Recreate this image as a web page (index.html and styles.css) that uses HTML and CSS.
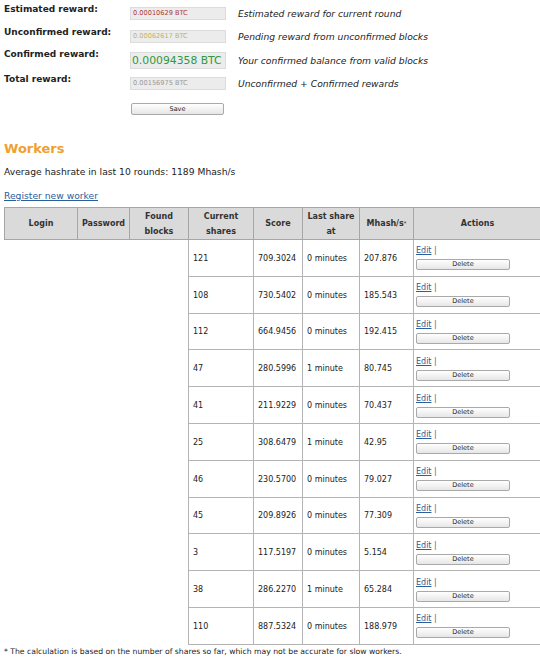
FILE: index.html
```html
<!DOCTYPE html>
<html>
<head>
<meta charset="utf-8">
<link rel="stylesheet" href="styles.css">
</head>
<body>
<div class="rewards">
  <div class="lbl">Estimated reward:</div>
  <div class="field est">0.00010629 BTC</div>
  <div class="desc">Estimated reward for current round</div>

  <div class="lbl">Unconfirmed reward:</div>
  <div class="field unc">0.00062617 BTC</div>
  <div class="desc">Pending reward from unconfirmed blocks</div>

  <div class="lbl">Confirmed reward:</div>
  <div class="field conf">0.00094358 BTC</div>
  <div class="desc">Your confirmed balance from valid blocks</div>

  <div class="lbl">Total reward:</div>
  <div class="field tot">0.00156975 BTC</div>
  <div class="desc">Unconfirmed + Confirmed rewards</div>
</div>
<button class="save">Save</button>

<h2 class="title">Workers</h2>
<p class="avg">Average hashrate in last 10 rounds: 1189 Mhash/s</p>
<a class="reg" href="#">Register new worker</a>

<table class="workers">
  <colgroup>
    <col class="c1"><col class="c2"><col class="c3"><col class="c4"><col class="c5"><col class="c6"><col class="c7"><col class="c8">
  </colgroup>
  <thead>
    <tr>
      <th>Login</th><th>Password</th><th>Found<br>blocks</th><th>Current<br>shares</th><th>Score</th><th>Last share<br>at</th><th>Mhash/s<span class="ast">*</span></th><th>Actions</th>
    </tr>
  </thead>
  <tbody>
    <tr><td class="e"></td><td class="e"></td><td class="e"></td><td>121</td><td>709.3024</td><td>0 minutes</td><td>207.876</td><td class="act"><a href="#">Edit</a> <span class="sep">|</span><button class="del">Delete</button></td></tr>
    <tr><td class="e"></td><td class="e"></td><td class="e"></td><td>108</td><td>730.5402</td><td>0 minutes</td><td>185.543</td><td class="act"><a href="#">Edit</a> <span class="sep">|</span><button class="del">Delete</button></td></tr>
    <tr><td class="e"></td><td class="e"></td><td class="e"></td><td>112</td><td>664.9456</td><td>0 minutes</td><td>192.415</td><td class="act"><a href="#">Edit</a> <span class="sep">|</span><button class="del">Delete</button></td></tr>
    <tr><td class="e"></td><td class="e"></td><td class="e"></td><td>47</td><td>280.5996</td><td>1 minute</td><td>80.745</td><td class="act"><a href="#">Edit</a> <span class="sep">|</span><button class="del">Delete</button></td></tr>
    <tr><td class="e"></td><td class="e"></td><td class="e"></td><td>41</td><td>211.9229</td><td>0 minutes</td><td>70.437</td><td class="act"><a href="#">Edit</a> <span class="sep">|</span><button class="del">Delete</button></td></tr>
    <tr><td class="e"></td><td class="e"></td><td class="e"></td><td>25</td><td>308.6479</td><td>1 minute</td><td>42.95</td><td class="act"><a href="#">Edit</a> <span class="sep">|</span><button class="del">Delete</button></td></tr>
    <tr><td class="e"></td><td class="e"></td><td class="e"></td><td>46</td><td>230.5700</td><td>0 minutes</td><td>79.027</td><td class="act"><a href="#">Edit</a> <span class="sep">|</span><button class="del">Delete</button></td></tr>
    <tr><td class="e"></td><td class="e"></td><td class="e"></td><td>45</td><td>209.8926</td><td>0 minutes</td><td>77.309</td><td class="act"><a href="#">Edit</a> <span class="sep">|</span><button class="del">Delete</button></td></tr>
    <tr><td class="e"></td><td class="e"></td><td class="e"></td><td>3</td><td>117.5197</td><td>0 minutes</td><td>5.154</td><td class="act"><a href="#">Edit</a> <span class="sep">|</span><button class="del">Delete</button></td></tr>
    <tr><td class="e"></td><td class="e"></td><td class="e"></td><td>38</td><td>286.2270</td><td>1 minute</td><td>65.284</td><td class="act"><a href="#">Edit</a> <span class="sep">|</span><button class="del">Delete</button></td></tr>
    <tr><td class="e"></td><td class="e"></td><td class="e"></td><td>110</td><td>887.5324</td><td>0 minutes</td><td>188.979</td><td class="act"><a href="#">Edit</a> <span class="sep">|</span><button class="del">Delete</button></td></tr>
  </tbody>
</table>
<p class="note">* The calculation is based on the number of shares so far, which may not be accurate for slow workers.</p>
</body>
</html>
```

FILE: styles.css
```css
html, body {
  margin: 0;
  padding: 0;
  overflow: hidden;
  background: #fff;
}
body {
  padding-left: 4px;
  font-family: "DejaVu Sans", Verdana, sans-serif;
  font-size: 9.2px;
  color: #222;
}
.rewards {
  display: grid;
  grid-template-columns: 126px 96px auto;
  grid-template-rows: 23px 22px 25px 13px;
  padding-top: 7px;
}
.lbl {
  font-weight: bold;
  font-size: 9px;
  line-height: 11px;
  margin-top: -3px;
  color: #222;
}
.field {
  box-sizing: border-box;
  background: #ececec;
  border: 1px solid #dcdcdc;
  height: 13px;
  line-height: 11px;
  padding-left: 2px;
  font-size: 6.6px;
  align-self: start;
}
.field.est { color: #b03838; }
.field.unc { color: #c2b455; }
.field.conf { color: #2f9a3c; height: 17px; line-height: 15px; font-size: 10.8px; padding-left: 1px; }
.field.tot { color: #999; }
.desc {
  font-style: italic;
  align-self: start;
  padding-left: 12px;
  line-height: 13px;
  white-space: nowrap;
  color: #222;
}
.rewards .desc:nth-child(9) { line-height: 17px; }
.save {
  display: block;
  margin: 13px 0 0 127px;
  width: 93px;
  height: 12px;
  padding: 0;
  font-family: "DejaVu Sans", Verdana, sans-serif;
  font-size: 6.5px;
  line-height: 10px;
  color: #222;
  background: linear-gradient(#ffffff, #e6e6e6);
  border: 1px solid #a9a9a9;
  border-radius: 2px;
}
.title {
  margin: 26px 0 0 0;
  font-size: 13px;
  line-height: 16px;
  font-weight: bold;
  color: #f0a02e;
}
.avg {
  margin: 9px 0 0 0;
  line-height: 12px;
}
.reg {
  display: block;
  margin-top: 12px;
  line-height: 12px;
  color: #2b5e9c;
}
.workers {
  margin-top: 5px;
  border-collapse: collapse;
  table-layout: fixed;
  width: 537px;
  font-size: 8px;
}
.c1 { width: 73px; }
.c2 { width: 52px; }
.c3 { width: 59px; }
.c4 { width: 65px; }
.c5 { width: 49px; }
.c6 { width: 57px; }
.c7 { width: 54px; }
.c8 { width: 128px; }
.workers th {
  background: #dadada;
  border: 1px solid #a6a6a6;
  font-weight: bold;
  line-height: 15px;
  height: 31px;
  padding: 0;
  text-align: center;
  color: #333;
}
.ast { font-size: 5px; vertical-align: 1px; }
.workers td {
  border: 1px solid #b4b4b4;
  height: 33.8px;
  padding: 2px 0 0 4px;
  line-height: 10px;
  vertical-align: middle;
  color: #222;
}
.workers td.e {
  border: none;
}
.workers td.act {
  padding: 1px 0 0 2px;
  vertical-align: middle;
}
.act a {
  color: #2b5e9c;
  line-height: 10px;
}
.sep { color: #666; }
.del {
  display: block;
  margin-top: 3px;
  width: 94px;
  height: 11px;
  padding: 0;
  font-family: "DejaVu Sans", Verdana, sans-serif;
  font-size: 6.5px;
  line-height: 9px;
  color: #222;
  background: linear-gradient(#ffffff, #e6e6e6);
  border: 1px solid #a9a9a9;
  border-radius: 2px;
}
.note {
  margin: 2px 0 0 0;
  font-size: 7.7px;
  line-height: 10px;
  white-space: nowrap;
  color: #222;
}
```
